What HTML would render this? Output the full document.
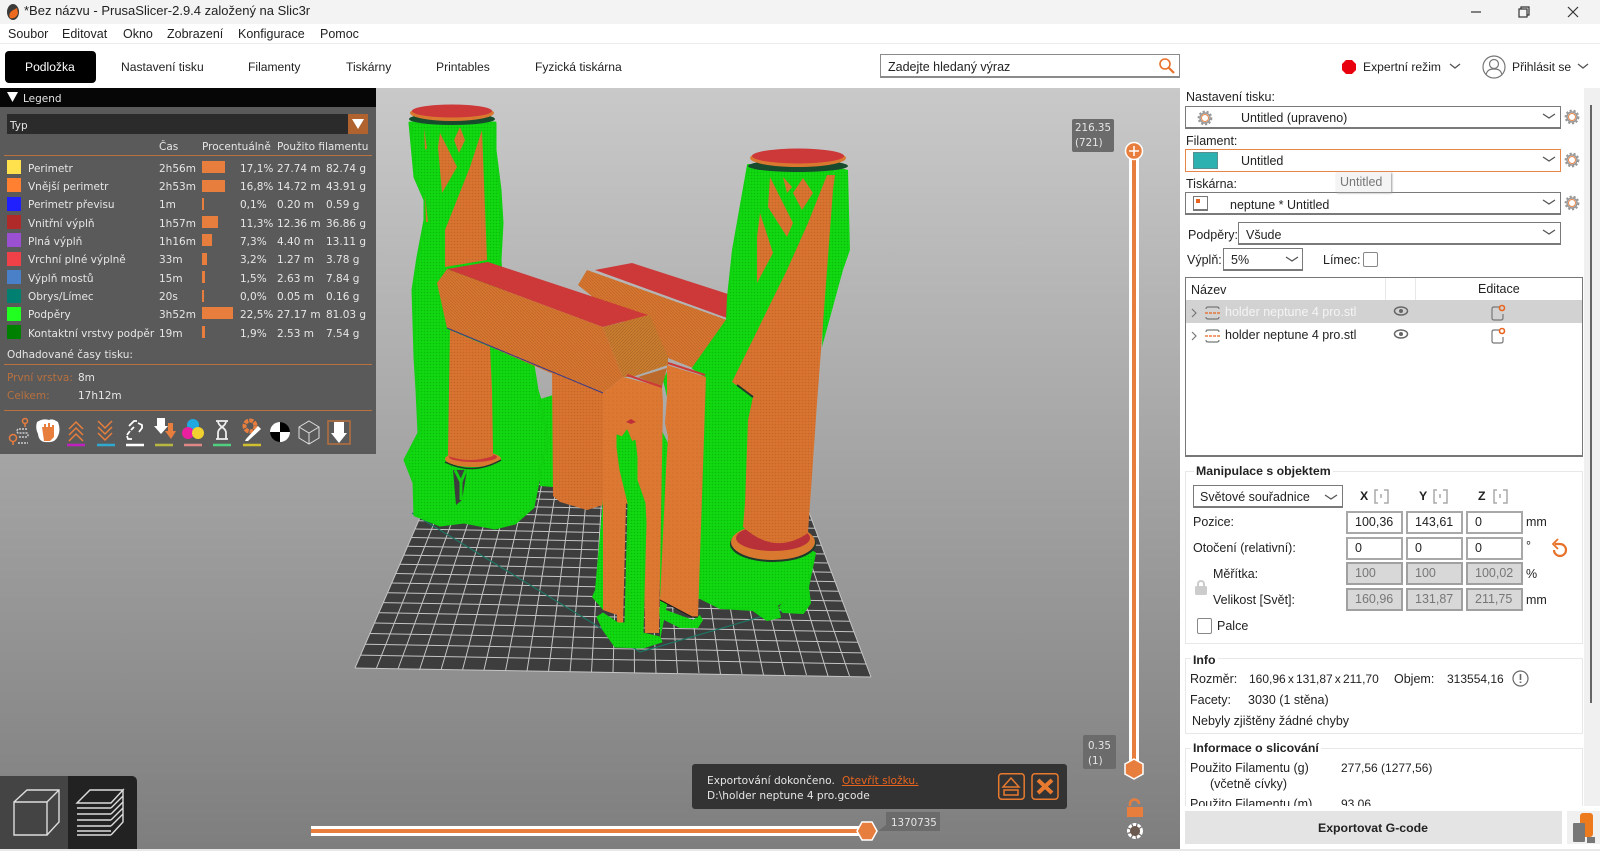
<!DOCTYPE html>
<html lang="cs"><head><meta charset="utf-8"><title>PrusaSlicer</title>
<style>
html,body{margin:0;padding:0;width:1600px;height:851px;overflow:hidden;background:#fff;font-family:"Liberation Sans",sans-serif;font-size:12.5px;color:#222}
div,span{box-sizing:border-box}
.t{position:absolute;white-space:nowrap;line-height:16px}
.a{position:absolute}
.d{font-family:"DejaVu Sans",sans-serif;font-size:10.5px;color:#e6e6e6;margin-top:1px}
.c{position:absolute;background:#fff;border:1px solid #7a7a7a;border-bottom-width:2px}
.i{position:absolute;background:#fff;border:2px solid #a8a8a8;height:23px;width:57px;line-height:19px;padding-left:7px;color:#222}
.g{background:#d8d8d8;color:#777;border-color:#a0a0a0}
.b{position:absolute;background:#e87e3e}
.h{font-weight:bold;font-size:12.3px}
.tb{font-size:12.1px;top:59px}
svg{position:absolute;overflow:visible}
</style></head><body>
<!-- title bar -->
<div class="a" style="left:0;top:0;width:1600px;height:24px;background:#f3f3f3"></div>
<svg style="left:5px;top:3px" width="16" height="18"><ellipse cx="8" cy="9" rx="6" ry="8" fill="#3a3a3a"/><path d="M12 5C6 8 3 10 5 15c4 1 7-1 8-5z" fill="#ee6a1e"/></svg>
<div class="t" style="left:24px;top:3px;font-size:13px">*Bez názvu - PrusaSlicer-2.9.4 založený na Slic3r</div>
<svg style="left:1465px;top:4px" width="125" height="16" fill="none" stroke="#333" stroke-width="1.2"><path d="M6 8h10"/><rect x="54" y="5" width="8" height="8"/><path d="M56 5V3h8v8h-2"/><path d="M103 3l10 10M113 3l-10 10"/></svg>
<!-- menu -->
<div class="a" style="left:0;top:43px;width:1600px;height:1px;background:#ececec"></div>
<div class="t" style="left:8px;top:26px">Soubor</div><div class="t" style="left:62px;top:26px">Editovat</div><div class="t" style="left:123px;top:26px">Okno</div><div class="t" style="left:167px;top:26px">Zobrazení</div><div class="t" style="left:238px;top:26px">Konfigurace</div><div class="t" style="left:320px;top:26px">Pomoc</div>
<!-- tabs -->
<div class="a" style="left:5px;top:51px;width:91px;height:32px;background:#000;border-radius:4px"></div>
<div class="t tb" style="left:25px;color:#fff">Podložka</div>
<div class="t tb" style="left:121px">Nastavení tisku</div><div class="t tb" style="left:248px">Filamenty</div><div class="t tb" style="left:346px">Tiskárny</div><div class="t tb" style="left:436px">Printables</div><div class="t tb" style="left:535px">Fyzická tiskárna</div>
<div class="a" style="left:880px;top:54px;width:300px;height:24px;border:1px solid #8a8a8a;border-bottom-width:2px"></div>
<div class="t" style="left:888px;top:59px">Zadejte hledaný výraz</div>
<svg style="left:1158px;top:57px" width="18" height="18" fill="none" stroke="#e8722a" stroke-width="1.6"><circle cx="7" cy="7" r="5"/><path d="M11 11l5 5" stroke-width="2.2"/></svg>
<svg style="left:1342px;top:60px" width="14" height="14"><path d="M4 0h6l4 4v6l-4 4H4L0 10V4z" fill="#e8000e"/></svg>
<div class="t tb" style="left:1363px">Expertní režim</div>
<svg style="left:1448px;top:62px" width="14" height="9" fill="none" stroke="#555" stroke-width="1.3"><path d="M2 2l5 4 5-4"/></svg>
<svg style="left:1482px;top:55px" width="24" height="24" fill="none" stroke="#777" stroke-width="1.2"><circle cx="12" cy="12" r="11"/><circle cx="12" cy="9" r="4.500"/><path d="M4 20c1-5 4-6 8-6s7 1 8 6"/></svg>
<div class="t tb" style="left:1512px">Přihlásit se</div>
<svg style="left:1576px;top:62px" width="14" height="9" fill="none" stroke="#555" stroke-width="1.3"><path d="M2 2l5 4 5-4"/></svg>
<!-- viewport -->
<div class="a" style="left:0;top:88px;width:1180px;height:761px;background:linear-gradient(#c9c9c9,#7e7e7e)"></div>
<svg style="left:0;top:0" width="1600" height="851">
<defs>
<pattern id="o" width="3" height="3" patternUnits="userSpaceOnUse"><rect width="3" height="3" fill="#d8742f"/><circle cx="1.500" cy="1.500" r=".8" fill="#c4652b"/></pattern>
<pattern id="q" width="4" height="4" patternUnits="userSpaceOnUse"><rect width="4" height="4" fill="#dc7832"/><circle cx="1" cy="1" r=".6" fill="#c96a2a"/></pattern>
<pattern id="p" width="3" height="3" patternUnits="userSpaceOnUse"><rect width="3" height="3" fill="#d6762f"/><path d="M0 0l3 3" stroke="#bf662a" stroke-width=".7"/></pattern>
<pattern id="e" width="3" height="3" patternUnits="userSpaceOnUse"><rect width="3" height="3" fill="#cc7d2e"/><path d="M0 3l3-3" stroke="#ad6a2a" stroke-width=".8"/></pattern>
<pattern id="v" width="3" height="3" patternUnits="userSpaceOnUse"><rect width="3" height="3" fill="#12d812"/><circle cx="1.500" cy="1.500" r=".8" fill="#0abd0a"/></pattern>
</defs>
<!-- bed -->
<path d="M447 455L790 462L871 677L355 668Z" fill="#3d3d3d"/>
<g stroke="#c4c4c4" stroke-width="1" fill="none">
<path d="M447 455L355 668M461 455L376.5 668M476 456L398 669M490 456L419.5 670M504 456L441 670M518.5 456L462.5 670M533 457L484 670M547 457L505.5 671M561 457L527 671M576 458L548.5 671M590 458L570 672M604 458L591.5 672M619 458L613 672M633 459L634.5 673M647 459L656 673M661.5 459L677.5 673M676 460L699 673M690 460L720.5 674M704 460L742 674M719 461L763.5 675M733 461L785 675M747 461L806.5 675M762 461L828 676M776 462L849.5 676M790 462L871 677"/>
<path d="M447 455H790M444 461.500L792.500 468.500M441.300 468.200L795 475.300M438.300 475.100L797.600 482.300M435.300 482.200L800.300 489.500M432.100 489.500L803.100 496.900M428.900 497L806 504.400M425.500 504.700L808.900 512.200M422.100 512.600L811.900 520.100M418.600 520.700L815 528.300M415 529L818.100 536.700M411.400 537.500L821.400 545.300M407.600 546.200L824.700 554M403.800 555.100L828 563M399.800 564.200L831.500 572.200M395.800 573.500L835 581.600M391.700 583L838.600 591.200M387.500 592.700L842.300 601M383.200 602.600L846.100 611M378.900 612.700L849.900 621.300M374.400 623L853.800 631.800M369.900 633.500L857.800 642.200M365.300 644.200L861.900 652.900M360.600 655.100L866 664M355 668L871 677"/>
</g>
<!-- skirt -->
<path d="M412 513L640 652L808 603" fill="none" stroke="#1d7563" stroke-width="1.2"/>
<!-- back green + back post -->
<path d="M537 400L553 395V487L540 486Z" fill="url(#v)"/>
<path d="M552 372L603 393V505L587 510L560 502L553 496Z" fill="url(#o)"/>
<!-- back bridge -->
<path d="M578 285L587 270L727 320L693 368L668 358Z" fill="url(#p)"/>
<path d="M595 270L632 263L728 294L727 318Z" fill="#cd3838"/>
<!-- left green -->
<path d="M410 123L495 123L495 150L500 190L502 223L500 260L505 340L533 365L537 390L540 400L548 440L541 467L533 507L515 523L495 528L464 522L440 525L415 515L414 483L405 460L419 433L417 390L415 357L413 290L418 257L425 220L425 200L415 177Z" fill="url(#v)" stroke="#10d010" stroke-width="3" stroke-linejoin="round"/>
<path d="M453 470L467 470L462 500L456 505Z" fill="#3d3d3d"/><path d="M455 470l6 12 5-12M461 482v18" stroke="#10d010" stroke-width="3" fill="none"/>
<!-- left trunk -->
<path d="M482 130L487 260L445 267L445 230L470 167Z" fill="url(#o)"/>
<path d="M440 133L457 167L442 193L438 147Z" fill="url(#o)"/>
<path d="M460 127L465 140L459 153L454 140Z" fill="url(#o)"/>
<path d="M424 128L427 148L425 150ZM425 195L428 222L426 222Z" fill="#d6722f"/>
<path d="M450 330L490 347L492 390L493 450L448 450Z" fill="url(#o)"/>
<ellipse cx="473" cy="459" rx="28" ry="8" fill="#d9782f"/><ellipse cx="473" cy="457" rx="24" ry="5" fill="#c83838"/>
<path d="M448 445L493 445L493 456Q470 464 448 456Z" fill="url(#o)"/>
<path d="M445 462Q473 476 501 460" fill="none" stroke="#1d3a2a" stroke-width="1.500"/>
<ellipse cx="452" cy="119" rx="43" ry="6" fill="#184b2e"/>
<ellipse cx="452" cy="113" rx="42" ry="8" fill="#d9782f"/><ellipse cx="452" cy="111" rx="40" ry="6.500" fill="#cd3838"/>
<!-- bridge 1 -->
<path d="M437 283L447 269L603 327L623 377L603 393L560 377L447 328Z" fill="url(#p)"/>
<path d="M447 269L488 262L648 315L603 327Z" fill="#cd3838"/>
<path d="M603 327L650 315L668 357L668 365L632 377L623 377Z" fill="url(#e)"/>
<path d="M447 328L603 393" stroke="#3a3a8a" stroke-width="1"/>
<!-- right green mass -->
<path d="M748 165L835 168L808 223L787 270L760 400L770 530L815 553L808 587L810 603L803 613L783 612L780 607L787 600L777 605L780 617L767 620L753 610L720 608L698 597L706 377L693 368L727 320L728 297L733 250Z" fill="url(#v)" stroke="#10d010" stroke-width="2" stroke-linejoin="round"/>
<path d="M837 167L848 170L850 250L843 270L822 347L825 250L830 180Z" fill="url(#v)"/>
<path d="M770 177L793 223L787 237L768 207Z" fill="url(#o)"/>
<path d="M760 213L773 253L757 283L757 237Z" fill="url(#o)"/>
<path d="M803 178L813 193L802 210L793 193Z" fill="url(#o)"/>
<path d="M783 177L792 187L787 193Z" fill="url(#o)"/>
<!-- foot and cone -->
<ellipse cx="773" cy="544" rx="43" ry="18" fill="#1d3a2a"/>
<ellipse cx="773" cy="542" rx="42" ry="18" fill="#d9782f"/><ellipse cx="773" cy="538" rx="37" ry="13" fill="#b83038"/>
<path d="M827 175L835 175L833 190L827 270L822 337L817 403L808 533Q775 556 743 527L745 503L748 420L753 397L732 382L787 270L808 223Z" fill="url(#o)"/>
<path d="M737 385L753 397" stroke="#1d3a2a" stroke-width="2"/>
<ellipse cx="798" cy="166" rx="50" ry="6" fill="#184b2e"/>
<ellipse cx="798" cy="158" rx="48" ry="9" fill="#d9782f"/><ellipse cx="798" cy="156" rx="46" ry="7.500" fill="#cd3838"/>
<!-- green behind pillars -->
<path d="M603 500L595 590L592 597L603 610Z" fill="url(#v)"/>
<path d="M660 427L668 443L668 600L660 640ZM663 380L668 370L667 397Z" fill="url(#v)"/>
<path d="M658 607L693 620L700 615L703 620L698 628L680 628L660 618Z" fill="url(#v)"/>
<!-- pillars -->
<path d="M603 393L623 377L662 387L663 403L659 633L645 633L643 520L626 503L623 625L617 625L617 615L603 610Z" fill="url(#q)"/>
<path d="M667 365L706 377L698 617L692 617L660 600L666 470L668 437L665 423L667 397Z" fill="url(#q)"/>
<path d="M638 377L667 368L662 387Z" fill="#bb6a2c"/>
<path d="M627 375L662 387M668 363L705 375" stroke="#cd3838" stroke-width="2"/>
<path d="M660 600L692 617L698 617" stroke="#1a1a1a" stroke-width="1" fill="none"/>
<!-- center green strip -->
<path d="M617 435L622 437L627 430L632 442L635 440L637 457L637 480L645 503L646 523L643 633L660 637L662 642L643 648L615 647L603 630L597 617L603 613L618 623L625 623L628 503L620 470L617 447Z" fill="url(#v)" stroke="#10d010" stroke-width="1" stroke-linejoin="round"/>
<path d="M620 422L628 418L640 423L640 440L635 440L630 430L622 425Z" fill="#dc7832"/>
<path d="M626 422L631 419L636 422L631 424Z" fill="#c03038"/>
</svg>
<!-- sliders -->
<div class="a" style="left:1129px;top:151px;width:10px;height:618px;background:#fff"></div><div class="a" style="left:1132px;top:151px;width:4px;height:618px;background:#e87e3e"></div>
<svg style="left:1124px;top:141px" width="20" height="20"><circle cx="10" cy="10" r="8.500" fill="#e87e3e" stroke="#fff" stroke-width="1.500"/><path d="M10 5v10M5 10h10" stroke="#fff" stroke-width="1.500"/></svg>
<svg style="left:1124px;top:758px" width="20" height="22"><path d="M10 1l9 5v10l-9 5-9-5V6z" fill="#e87e3e" stroke="#fff" stroke-width="1.500"/></svg>
<div class="a" style="left:1072px;top:119px;width:42px;height:33px;background:#6b6b6b;border-radius:2px"></div>
<div class="t d" style="left:1075px;top:119px;font-size:10.3px">216.35</div><div class="t d" style="left:1075px;top:134px;font-size:10.3px">(721)</div>
<div class="a" style="left:1083px;top:735px;width:33px;height:34px;background:#6b6b6b;border-radius:2px"></div>
<div class="t d" style="left:1088px;top:737px;font-size:10.3px">0.35</div><div class="t d" style="left:1088px;top:752px;font-size:10.3px">(1)</div>
<div class="a" style="left:311px;top:826px;width:556px;height:10px;background:#fff"></div><div class="a" style="left:311px;top:829px;width:556px;height:4px;background:#e87e3e"></div>
<svg style="left:856px;top:821px" width="22" height="20"><path d="M1 10l5-9h10l5 9-5 9H6z" fill="#e87e3e" stroke="#fff" stroke-width="1.500"/></svg>
<svg style="left:878px;top:812px" width="62" height="20"><path d="M8 0h54v19H0l8-6z" fill="#6b6b6b"/></svg>
<div class="t d" style="left:891px;top:814px;font-size:10.3px">1370735</div>
<svg style="left:1126px;top:798px" width="18" height="44"><path d="M4 8V6a4.500 4.500 0 0 1 9 0" fill="none" stroke="#e87e3e" stroke-width="2.500"/><rect x="1" y="9" width="16" height="10" fill="#e87e3e"/><circle cx="9" cy="33" r="6.500" fill="#6a5a50"/><circle cx="9" cy="33" r="6.500" fill="none" stroke="#fff" stroke-width="3" stroke-dasharray="3.500 1.200"/></svg>
<!-- notification -->
<div class="a" style="left:692px;top:764px;width:375px;height:45px;background:#333;border-radius:3px"></div>
<div class="t d" style="left:707px;top:772px;font-size:10.6px">Exportování dokončeno.</div>
<div class="t d" style="left:842px;top:772px;font-size:10.6px;color:#e8641e;text-decoration:underline">Otevřít složku.</div>
<div class="t d" style="left:707px;top:787px;font-size:10.6px">D:\holder neptune 4 pro.gcode</div>
<svg style="left:998px;top:773px" width="62" height="27" fill="none" stroke="#e87a30" stroke-width="1.500"><rect x=".7" y=".7" width="25.500" height="25.500" rx="3"/><path d="M13 5l8 9H5zM6 17h14v5H6z"/><rect x="34" y=".7" width="26" height="25.500" rx="3"/><path d="M40 7l14 13M54 7L40 20" stroke-width="4"/></svg>
<!-- toolbar -->
<div class="a" style="left:0;top:776px;width:68px;height:73px;background:#444"></div>
<div class="a" style="left:68px;top:776px;width:69px;height:73px;background:#222;border-top-right-radius:5px"></div>
<svg style="left:0;top:776px" width="137" height="73" fill="none" stroke="#ddd" stroke-width="1.400"><path d="M14 26H47V59H14ZM14 26L27 14H59V46L47 59M47 26L59 14"/><path d="M77 27L90 14H123L111 27ZM77 32H111M77 38H111M77 44H111M77 50H111M77 55H111M77 59H111M111 27L123 14V46L111 59M111 32L123 20M111 38L123 26M111 44L123 32M111 50L123 38"/></svg>
<!-- legend -->
<div class="a" style="left:0;top:88px;width:376px;height:366px;background:#5a5a5a"></div>
<div class="a" style="left:0;top:88px;width:376px;height:19px;background:#060606"></div>
<svg style="left:7px;top:92px" width="11" height="10"><path d="M0 0h11L5.500 10z" fill="#fff"/></svg>
<div class="t d" style="left:23px;top:90px">Legend</div>
<div class="a" style="left:7px;top:114px;width:341px;height:20px;background:#2b2b2b"></div>
<div class="a" style="left:348px;top:114px;width:20px;height:20px;background:#b0622f"></div>
<svg style="left:352px;top:119px" width="12" height="10"><path d="M0 0h12L6 10z" fill="#fff"/></svg>
<div class="t d" style="left:10px;top:117px">Typ</div>
<div class="t d" style="left:159px;top:138px">Čas</div><div class="t d" style="left:202px;top:138px">Procentuálně</div><div class="t d" style="left:277px;top:138px">Použito filamentu</div>
<div class="a" style="left:4px;top:155px;width:368px;height:1px;background:#b8703e"></div>
<!-- rows -->
<div class="a" style="left:7px;top:160px;width:14px;height:14px;background:#ffe14d"></div><div class="t d" style="left:28px;top:160px">Perimetr</div><div class="t d" style="left:159px;top:160px">2h56m</div><div class="b" style="left:202px;top:161px;width:23px;height:12px"></div><div class="t d" style="left:240px;top:160px">17,1%</div><div class="t d" style="left:277px;top:160px">27.74 m</div><div class="t d" style="left:326px;top:160px">82.74 g</div>
<div class="a" style="left:7px;top:178px;width:14px;height:14px;background:#ff8030"></div><div class="t d" style="left:28px;top:178px">Vnější perimetr</div><div class="t d" style="left:159px;top:178px">2h53m</div><div class="b" style="left:202px;top:180px;width:23px;height:12px"></div><div class="t d" style="left:240px;top:178px">16,8%</div><div class="t d" style="left:277px;top:178px">14.72 m</div><div class="t d" style="left:326px;top:178px">43.91 g</div>
<div class="a" style="left:7px;top:197px;width:14px;height:14px;background:#2020ff"></div><div class="t d" style="left:28px;top:196px">Perimetr převisu</div><div class="t d" style="left:159px;top:196px">1m</div><div class="b" style="left:202px;top:198px;width:2px;height:12px"></div><div class="t d" style="left:240px;top:196px">0,1%</div><div class="t d" style="left:277px;top:196px">0.20 m</div><div class="t d" style="left:326px;top:196px">0.59 g</div>
<div class="a" style="left:7px;top:215px;width:14px;height:14px;background:#b02a2a"></div><div class="t d" style="left:28px;top:215px">Vnitřní výplň</div><div class="t d" style="left:159px;top:215px">1h57m</div><div class="b" style="left:202px;top:216px;width:16px;height:12px"></div><div class="t d" style="left:240px;top:215px">11,3%</div><div class="t d" style="left:277px;top:215px">12.36 m</div><div class="t d" style="left:326px;top:215px">36.86 g</div>
<div class="a" style="left:7px;top:233px;width:14px;height:14px;background:#9a50d0"></div><div class="t d" style="left:28px;top:233px">Plná výplň</div><div class="t d" style="left:159px;top:233px">1h16m</div><div class="b" style="left:202px;top:234px;width:10px;height:12px"></div><div class="t d" style="left:240px;top:233px">7,3%</div><div class="t d" style="left:277px;top:233px">4.40 m</div><div class="t d" style="left:326px;top:233px">13.11 g</div>
<div class="a" style="left:7px;top:252px;width:14px;height:14px;background:#f04048"></div><div class="t d" style="left:28px;top:251px">Vrchní plné výplně</div><div class="t d" style="left:159px;top:251px">33m</div><div class="b" style="left:202px;top:253px;width:5px;height:12px"></div><div class="t d" style="left:240px;top:251px">3,2%</div><div class="t d" style="left:277px;top:251px">1.27 m</div><div class="t d" style="left:326px;top:251px">3.78 g</div>
<div class="a" style="left:7px;top:270px;width:14px;height:14px;background:#4a80c8"></div><div class="t d" style="left:28px;top:270px">Výplň mostů</div><div class="t d" style="left:159px;top:270px">15m</div><div class="b" style="left:202px;top:271px;width:2.500px;height:12px"></div><div class="t d" style="left:240px;top:270px">1,5%</div><div class="t d" style="left:277px;top:270px">2.63 m</div><div class="t d" style="left:326px;top:270px">7.84 g</div>
<div class="a" style="left:7px;top:289px;width:14px;height:14px;background:#008070"></div><div class="t d" style="left:28px;top:288px">Obrys/Límec</div><div class="t d" style="left:159px;top:288px">20s</div><div class="b" style="left:202px;top:290px;width:1.500px;height:12px"></div><div class="t d" style="left:240px;top:288px">0,0%</div><div class="t d" style="left:277px;top:288px">0.05 m</div><div class="t d" style="left:326px;top:288px">0.16 g</div>
<div class="a" style="left:7px;top:307px;width:14px;height:14px;background:#20ff20"></div><div class="t d" style="left:28px;top:306px">Podpěry</div><div class="t d" style="left:159px;top:306px">3h52m</div><div class="b" style="left:202px;top:307px;width:31px;height:12px"></div><div class="t d" style="left:240px;top:306px">22,5%</div><div class="t d" style="left:277px;top:306px">27.17 m</div><div class="t d" style="left:326px;top:306px">81.03 g</div>
<div class="a" style="left:7px;top:325px;width:14px;height:14px;background:#008000"></div><div class="t d" style="left:28px;top:325px">Kontaktní vrstvy podpěr</div><div class="t d" style="left:159px;top:325px">19m</div><div class="b" style="left:202px;top:326px;width:3px;height:12px"></div><div class="t d" style="left:240px;top:325px">1,9%</div><div class="t d" style="left:277px;top:325px">2.53 m</div><div class="t d" style="left:326px;top:325px">7.54 g</div>
<div class="t d" style="left:7px;top:346px">Odhadované časy tisku:</div>
<div class="a" style="left:4px;top:364px;width:368px;height:1px;background:#b8703e"></div>
<div class="t d" style="left:7px;top:369px;color:#b8703e">První vrstva:</div><div class="t d" style="left:78px;top:369px">8m</div>
<div class="t d" style="left:7px;top:387px;color:#b8703e">Celkem:</div><div class="t d" style="left:78px;top:387px">17h12m</div>
<div class="a" style="left:4px;top:410px;width:368px;height:1px;background:#b8703e"></div>
<svg style="left:0;top:415px" width="376" height="36" fill="none" stroke-width="1.500">
<g stroke="#e87e3e"><circle cx="13" cy="23" r="3.500"/><path d="M13 27v3"/><circle cx="25" cy="6" r="2.500"/><path d="M25 9v3"/></g><path d="M27 14h-9q-2 2 0 4h9q2 2 0 4h-9M18 28h10" stroke="#ccc" stroke-dasharray="2 1"/>
<path d="M37 7q6-4 12-2 3-2 9 2 3 8 0 14-3 7-10 6-9 1-10-8-3-6-1-12z" fill="#fff"/><path d="M42 12h2v-3h2v3h2v-4h2v4h2v-2h2v12l-4 4h-6z" fill="#e87e3e"/>
<path d="M69 14l7-7 7 7M69 20l7-7 7 7M69 26l7-7 7 7" stroke="#e87e3e"/><path d="M67 30h18" stroke="#c020c0" stroke-width="2.500"/>
<path d="M98 6l7 7 7-7M98 12l7 7 7-7M98 18l7 7 7-7" stroke="#e87e3e"/><path d="M97 30h18" stroke="#30a8d0" stroke-width="2.500"/>
<path d="M129 11l5-5 3 0M138 8l4 2 0 3-3 4M127 20l3-4M132 24l-4 0-1-3M134 12l-3 3" stroke="#fff" stroke-width="1.800"/><path d="M126 30h18" stroke="#fff" stroke-width="2.500"/>
<path d="M157 3h8v8h3l-7 8-7-8h3z" fill="#fff"/><path d="M168 8h5v8h3l-5 8-6-8h3z" fill="#e87e3e"/><path d="M155 30h18" stroke="#b8b840" stroke-width="2.500"/>
<circle cx="193" cy="10" r="6" fill="#20a8e0"/><circle cx="188" cy="18" r="6" fill="#e820a0"/><circle cx="198" cy="18" r="6" fill="#f0d030"/><path d="M184 30h18" stroke="#e08888" stroke-width="2.500"/>
<path d="M216 6h12M216 24h12M218 6c0 6 8 6 8 12v6h-8v-6c0-6 8-6 8-12" stroke="#eee" stroke-width="1.800"/><path d="M213 30h18" stroke="#50d080" stroke-width="2.500"/>
<circle cx="250" cy="11" r="5.500" stroke="#e87e3e" stroke-width="4" stroke-dasharray="4 1"/><path d="M246 24l12-13 3 3-13 12h-3z" fill="#fff"/><path d="M243 30h18" stroke="#d0c030" stroke-width="2.500"/>
<circle cx="280" cy="17" r="10" fill="#fff"/><path d="M280 7a10 10 0 0 1 10 10h-10zM280 27a10 10 0 0 1-10-10h10z" fill="#000"/>
<path d="M309 6l10 6v11l-10 6-10-6V12zM299 12l10 6 10-6M309 18v11" stroke="#ddd" stroke-width="1"/>
<rect x="328" y="6" width="22" height="23" stroke="#b8703e"/><path d="M334 7h10v11h3l-8 10-8-10h3z" fill="#fff"/>
</svg>
<!-- right panel -->
<div class="a" style="left:1584px;top:88px;width:16px;height:722px;background:#f0f0f0"></div>
<div class="a" style="left:1590px;top:105px;width:2px;height:598px;background:#666"></div>
<div class="t" style="left:1186px;top:89px">Nastavení tisku:</div>
<div class="c" style="left:1185px;top:106px;width:376px;height:23px"></div>
<div class="t" style="left:1241px;top:110px">Untitled (upraveno)</div>
<div class="t" style="left:1186px;top:133px">Filament:</div>
<div class="c" style="left:1185px;top:149px;width:376px;height:23px;border:1px solid #e8864a"></div>
<div class="a" style="left:1193px;top:152px;width:25px;height:17px;background:#2db0b0;border:1px solid #5b8f8f"></div>
<div class="t" style="left:1241px;top:153px">Untitled</div>
<div class="t" style="left:1186px;top:176px">Tiskárna:</div>
<div class="c" style="left:1185px;top:192px;width:376px;height:23px"></div>
<div class="a" style="left:1193px;top:196px;width:15px;height:15px;background:#fff;border:1px solid #777;border-bottom-width:2px"></div><div class="a" style="left:1196px;top:199px;width:4px;height:4px;background:#e8641e"></div>
<div class="t" style="left:1230px;top:197px">neptune * Untitled</div>
<div class="t" style="left:1188px;top:227px">Podpěry:</div>
<div class="c" style="left:1238px;top:222px;width:323px;height:23px"></div>
<div class="t" style="left:1246px;top:227px">Všude</div>
<div class="t" style="left:1187px;top:252px">Výplň:</div>
<div class="c" style="left:1223px;top:248px;width:80px;height:23px"></div>
<div class="t" style="left:1231px;top:252px">5%</div>
<div class="t" style="left:1323px;top:252px">Límec:</div>
<div class="a" style="left:1363px;top:252px;width:15px;height:15px;border:1px solid #888;border-radius:2px"></div>
<svg style="left:1180px;top:100px" width="400" height="180" fill="none" stroke="#555" stroke-width="1.300"><path d="M363 14l6 4 6-4M363 57l6 4 6-4M363 100l6 4 6-4M363 130l6 4 6-4M106 157l6 4 6-4"/></svg>
<svg style="left:1190px;top:108px" width="400" height="120" fill="none"><g stroke="#999" stroke-width="1.500"><circle cx="15" cy="10" r="5"/><circle cx="382" cy="9" r="5"/><circle cx="382" cy="52" r="5"/><circle cx="382" cy="95" r="5"/></g><g stroke="#999" stroke-width="1.800" stroke-dasharray="2.200 1.800"><circle cx="15" cy="10" r="6.500"/><circle cx="382" cy="9" r="6.500"/><circle cx="382" cy="52" r="6.500"/><circle cx="382" cy="95" r="6.500"/></g><g stroke="#e8864a" stroke-width="1"><circle cx="15" cy="10" r="3.500"/><circle cx="382" cy="9" r="3.500"/><circle cx="382" cy="52" r="3.500"/><circle cx="382" cy="95" r="3.500"/></g></svg>
<div class="a" style="left:1336px;top:172px;width:55px;height:20px;background:#f4f4f4;box-shadow:1px 1px 2px #999"></div>
<div class="t" style="left:1340px;top:174px;color:#777">Untitled</div>
<!-- tree -->
<div class="a" style="left:1185px;top:277px;width:398px;height:180px;border:1px solid #777;border-bottom-width:2px"></div>
<div class="a" style="left:1186px;top:300px;width:396px;height:23px;background:#d2d2d2"></div>
<div class="a" style="left:1385px;top:278px;width:1px;height:22px;background:#e8e8e8"></div><div class="a" style="left:1415px;top:278px;width:1px;height:22px;background:#e8e8e8"></div>
<div class="t" style="left:1191px;top:282px">Název</div><div class="t" style="left:1478px;top:281px">Editace</div>
<div class="t" style="left:1225px;top:304px;color:#f4f4f4">holder neptune 4 pro.stl</div>
<div class="t" style="left:1225px;top:327px">holder neptune 4 pro.stl</div>
<svg style="left:1190px;top:302px" width="320" height="44" fill="none" stroke-width="1.200">
<g stroke="#777"><path d="M2 7l4 4-4 4M2 30l4 4-4 4"/><path d="M16 7q0-2 2-2h9q2 0 2 2M16 15q0 2 2 2h9q2 0 2-2M16 30q0-2 2-2h9q2 0 2 2M16 38q0 2 2 2h9q2 0 2-2"/></g>
<path d="M15 11h15M15 34h15" stroke="#e8641e" stroke-dasharray="3 1"/>
<g stroke="#666" stroke-width="1.500"><ellipse cx="211" cy="9" rx="6.500" ry="4"/><ellipse cx="211" cy="32" rx="6.500" ry="4"/></g><circle cx="211" cy="9" r="2" fill="#666"/><circle cx="211" cy="32" r="2" fill="#666"/>
<g stroke="#777"><path d="M309 5h-5q-2 0-2 2v9q0 2 2 2h7q2 0 2-2v-4M309 28h-5q-2 0-2 2v9q0 2 2 2h7q2 0 2-2v-4"/></g>
<g stroke="#e8641e" stroke-width="1.600"><circle cx="312" cy="6" r="2.500"/><circle cx="312" cy="29" r="2.500"/></g></svg>
<!-- manipulace -->
<div class="a" style="left:1185px;top:471px;width:398px;height:173px;border:1px solid #e8e8e8"></div>
<div class="t h" style="left:1194px;top:463px;background:#fff;padding:0 2px">Manipulace s objektem</div>
<div class="c" style="left:1193px;top:485px;width:150px;height:23px"></div>
<div class="t" style="left:1200px;top:489px">Světové souřadnice</div>
<svg style="left:1324px;top:494px" width="14" height="8" fill="none" stroke="#555" stroke-width="1.300"><path d="M1 1l6 4 6-4"/></svg>
<div class="t h" style="left:1360px;top:488px">X</div><div class="t h" style="left:1419px;top:488px">Y</div><div class="t h" style="left:1478px;top:488px">Z</div>
<svg style="left:1374px;top:489px" width="140" height="15" fill="none" stroke="#aaa" stroke-width="1.500"><path d="M4 1H1v13h3M10 1h4v13h-4M7 5v4"/><path d="M63 1H60v13h3M69 1h4v13h-4M66 5v4"/><path d="M123 1H120v13h3M129 1h4v13h-4M126 5v4"/></svg>
<div class="t" style="left:1193px;top:514px">Pozice:</div><div class="t" style="left:1193px;top:540px">Otočení (relativní):</div><div class="t" style="left:1213px;top:566px">Měřítka:</div><div class="t" style="left:1213px;top:592px">Velikost [Svět]:</div>
<div class="i" style="left:1346px;top:511px">100,36</div><div class="i" style="left:1406px;top:511px">143,61</div><div class="i" style="left:1466px;top:511px">0</div><div class="t" style="left:1526px;top:514px">mm</div>
<div class="i" style="left:1346px;top:537px">0</div><div class="i" style="left:1406px;top:537px">0</div><div class="i" style="left:1466px;top:537px">0</div><div class="t" style="left:1526px;top:538px">°</div>
<div class="i g" style="left:1346px;top:562px">100</div><div class="i g" style="left:1406px;top:562px">100</div><div class="i g" style="left:1466px;top:562px">100,02</div><div class="t" style="left:1526px;top:566px">%</div>
<div class="i g" style="left:1346px;top:588px">160,96</div><div class="i g" style="left:1406px;top:588px">131,87</div><div class="i g" style="left:1466px;top:588px">211,75</div><div class="t" style="left:1526px;top:592px">mm</div>
<svg style="left:1550px;top:538px" width="18" height="20" fill="none" stroke="#e8722a" stroke-width="2.200"><path d="M5 6h5a6 6 0 1 1-6 6"/><path d="M8 1L3 6l5 5" stroke-width="1.800"/></svg>
<svg style="left:1194px;top:579px" width="14" height="16"><path d="M4 7V5a3 3 0 0 1 6 0v2" fill="none" stroke="#ccc" stroke-width="2"/><rect x="1" y="7" width="12" height="9" rx="1.500" fill="#ccc"/></svg>
<div class="a" style="left:1197px;top:618px;width:15px;height:16px;border:1px solid #888;border-radius:2px"></div>
<div class="t" style="left:1217px;top:618px">Palce</div>
<!-- info -->
<div class="a" style="left:1185px;top:658px;width:398px;height:76px;border:1px solid #e8e8e8"></div>
<div class="t h" style="left:1191px;top:652px;background:#fff;padding:0 2px">Info</div>
<div class="t" style="left:1190px;top:671px">Rozměr:</div><div class="t" style="left:1249px;top:671px;font-size:12px;word-spacing:-1.200px">160,96 x 131,87 x 211,70</div><div class="t" style="left:1394px;top:671px">Objem:</div><div class="t" style="left:1447px;top:671px;font-size:12px">313554,16</div>
<svg style="left:1512px;top:670px" width="17" height="17" fill="none" stroke="#666" stroke-width="1.200"><circle cx="8.500" cy="8.500" r="7.500"/><path d="M8.500 4v6M8.500 11.500v1.500" stroke-width="1.600"/></svg>
<div class="t" style="left:1190px;top:692px">Facety:</div><div class="t" style="left:1248px;top:692px">3030 (1 stěna)</div>
<div class="t" style="left:1192px;top:713px">Nebyly zjištěny žádné chyby</div>
<div class="a" style="left:1185px;top:748px;width:398px;height:70px;border:1px solid #e8e8e8"></div>
<div class="t h" style="left:1191px;top:740px;background:#fff;padding:0 2px">Informace o slicování</div>
<div class="t" style="left:1190px;top:760px">Použito Filamentu (g)</div><div class="t" style="left:1341px;top:760px;font-size:12px">277,56 (1277,56)</div>
<div class="t" style="left:1210px;top:776px">(včetně cívky)</div>
<div class="t" style="left:1190px;top:796px">Použito Filamentu (m)</div><div class="t" style="left:1341px;top:796px;font-size:12px">93,06</div>
<div class="a" style="left:1180px;top:806px;width:420px;height:45px;background:#fff"></div>
<div class="a" style="left:1185px;top:811px;width:377px;height:33px;background:#e4e4e4"></div>
<div class="t h" style="left:1318px;top:820px">Exportovat G-code</div>
<div class="a" style="left:1567px;top:811px;width:33px;height:33px;background:#f0f0f0"></div>
<svg style="left:1570px;top:812px" width="26" height="32"><rect x="10" y="1" width="13" height="24" rx="3" fill="#ee7a1e"/><rect x="3" y="11" width="12" height="19" rx="1" fill="#777"/><rect x="17" y="25" width="8" height="6" fill="#777"/></svg>
<div class="a" style="left:0;top:849px;width:1600px;height:2px;background:#e8e8e8"></div>
</body></html>
